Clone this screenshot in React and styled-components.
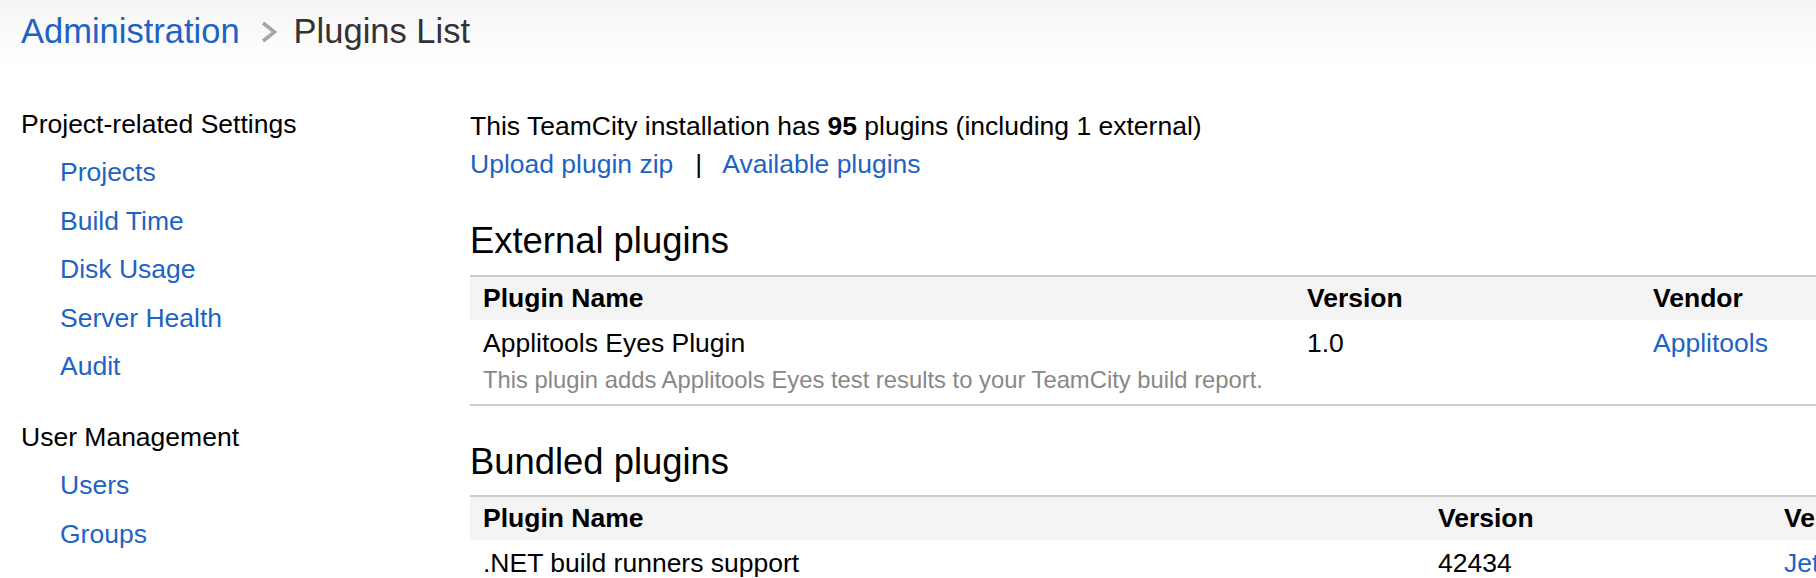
import React from 'react';
import styled, { createGlobalStyle } from "styled-components";

const GlobalStyle = createGlobalStyle`
    html, body {
        margin: 0;
        padding: 0;
        background: #ffffff;
        overflow: hidden;
    }
    body {
        font-family: "Liberation Sans", Arial, Helvetica, sans-serif;
        font-size: 26.5px;
        color: #000;
    }
`

const Page = styled.div`
    width: 1816px;
    height: 578px;
    overflow: hidden;
`

const Header = styled.div`
    height: 64px;
    padding: 11px 0 0 21px;
    box-sizing: border-box;
    background: linear-gradient(#f5f5f5, #ffffff);
    display: flex;
    align-items: flex-start;
`

const Crumb = styled.a`
    font-size: 34.5px;
    line-height: 40px;
    color: ${p => p.current ? "#333333" : "#1e63c4"};
    text-decoration: none;
    white-space: nowrap;
`

const Chevron = styled.svg`
    width: 20px;
    height: 24px;
    margin: 9px 15px 0 19px;
    flex-shrink: 0;
`

const Body = styled.div`
    display: flex;
    padding-top: 35.6px;
`

const Sidebar = styled.div`
    width: 470px;
    flex-shrink: 0;
    padding-left: 21px;
    box-sizing: border-box;
`

const Group = styled.div`
    margin-bottom: 22px;
`

const GroupTitle = styled.div`
    line-height: 48.5px;
    color: #000;
    white-space: nowrap;
`

const NavLink = styled.a`
    display: block;
    padding-left: 39px;
    line-height: 48.5px;
    color: #1e63c4;
    text-decoration: none;
    white-space: nowrap;
`

const Main = styled.div`
    flex: 1;
    padding-top: 7.6px;
    min-width: 0;
`

const Line = styled.div`
    line-height: 38.2px;
    white-space: nowrap;
`

const Link = styled.a`
    color: #1e63c4;
    text-decoration: none;
`

const Sep = styled.span`
    display: inline-block;
    margin: 0 20px 0 22px;
    color: #000;
`

const Heading = styled.h2`
    margin: ${p => p.first ? "36.5px" : "35px"} 0 12.5px;
    font-size: 36.4px;
    line-height: 42px;
    font-weight: normal;
    white-space: nowrap;
`

const Table = styled.table`
    width: 1900px;
    table-layout: fixed;
    border-collapse: collapse;
    border-top: 2px solid #cccccc;
    border-bottom: ${p => p.closed ? "2px solid #cccccc" : "none"};
`

const Col = styled.col`
    width: ${p => p.w}px;
`

const HeadCell = styled.th`
    height: 43px;
    padding: 0 13px;
    background: #f4f4f4;
    text-align: left;
    font-weight: bold;
    vertical-align: middle;
    white-space: nowrap;
`

const Cell = styled.td`
    padding: 5px 13px 5px;
    vertical-align: top;
    line-height: 36px;
    white-space: nowrap;
`

const Note = styled.div`
    font-size: 23.8px;
    line-height: 38px;
    color: #888888;
`

const externalCols = [824, 346, 730];
const bundledCols = [955, 346, 599];

const PluginTable = ({ cols, rows, closed }) => (
  <Table closed={closed}>
    <colgroup>
      {cols.map((w, i) => <Col key={i} w={w} />)}
    </colgroup>
    <thead>
      <tr>
        <HeadCell>Plugin Name</HeadCell>
        <HeadCell>Version</HeadCell>
        <HeadCell>Vendor</HeadCell>
      </tr>
    </thead>
    <tbody>
      {rows.map(r => (
        <tr key={r.name}>
          <Cell>
            {r.name}
            {r.note && <Note>{r.note}</Note>}
          </Cell>
          <Cell>{r.version}</Cell>
          <Cell><Link href="#">{r.vendor}</Link></Cell>
        </tr>
      ))}
    </tbody>
  </Table>
);

const App = () => {
  return (
    <Page>
      <GlobalStyle />
      <Header>
        <Crumb href="#">Administration</Crumb>
        <Chevron viewBox="0 0 20 24">
          <path d="M4 3 L15.5 12 L4 21" fill="none" stroke="#a8a8a8" strokeWidth="3.6" />
        </Chevron>
        <Crumb current>Plugins List</Crumb>
      </Header>
      <Body>
        <Sidebar>
          <Group>
            <GroupTitle>Project-related Settings</GroupTitle>
            <NavLink href="#">Projects</NavLink>
            <NavLink href="#">Build Time</NavLink>
            <NavLink href="#">Disk Usage</NavLink>
            <NavLink href="#">Server Health</NavLink>
            <NavLink href="#">Audit</NavLink>
          </Group>
          <Group>
            <GroupTitle>User Management</GroupTitle>
            <NavLink href="#">Users</NavLink>
            <NavLink href="#">Groups</NavLink>
          </Group>
        </Sidebar>
        <Main>
          <Line>This TeamCity installation has <b>95</b> plugins (including 1 external)</Line>
          <Line>
            <Link href="#">Upload plugin zip</Link>
            <Sep>|</Sep>
            <Link href="#">Available plugins</Link>
          </Line>
          <Heading first>External plugins</Heading>
          <PluginTable
            closed
            cols={externalCols}
            rows={[{
              name: "Applitools Eyes Plugin",
              note: "This plugin adds Applitools Eyes test results to your TeamCity build report.",
              version: "1.0",
              vendor: "Applitools"
            }]}
          />
          <Heading>Bundled plugins</Heading>
          <PluginTable
            cols={bundledCols}
            rows={[{ name: ".NET build runners support", version: "42434", vendor: "JetBrains" }]}
          />
        </Main>
      </Body>
    </Page>
  );
}

export default App
